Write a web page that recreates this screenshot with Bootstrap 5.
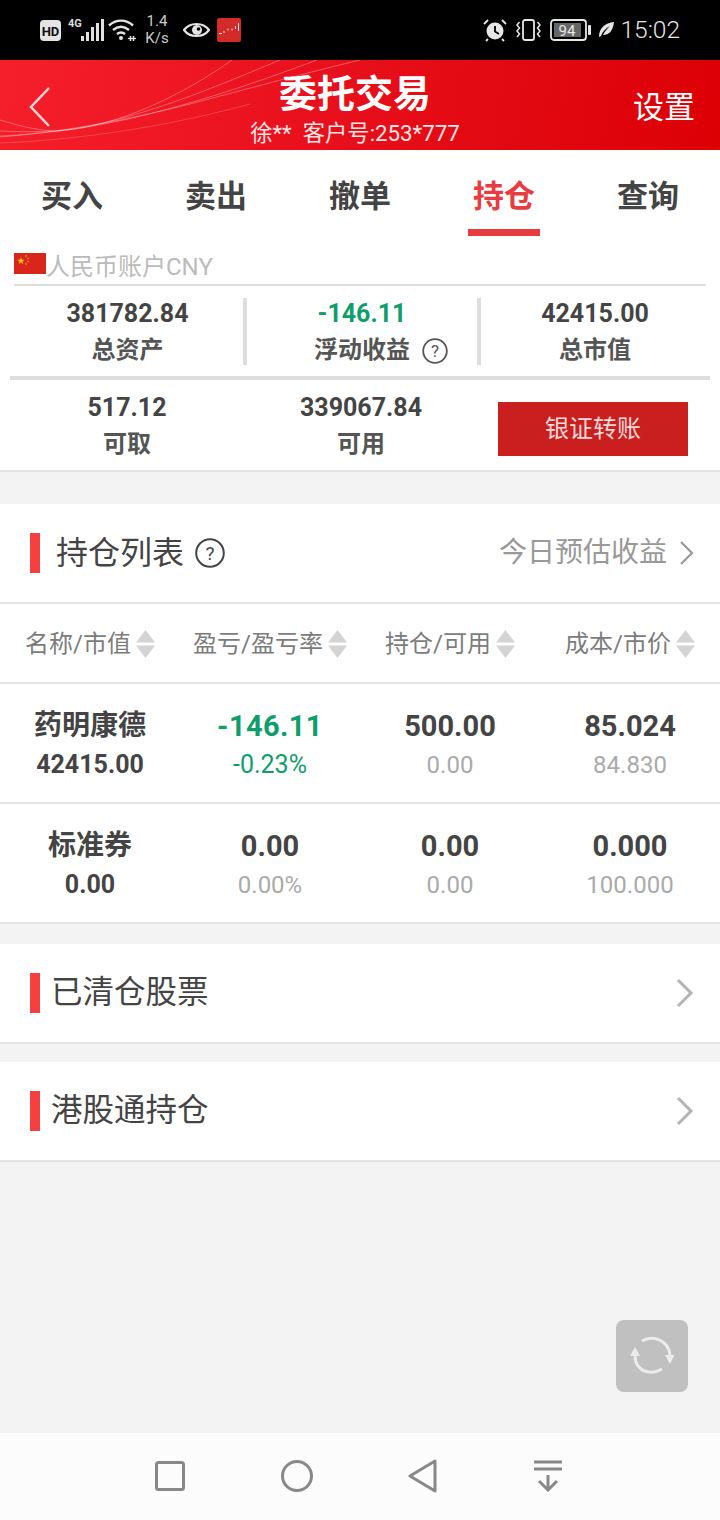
<!DOCTYPE html>
<html lang="zh-CN">
<head>
	<meta charset="UTF-8" />
	<meta name="viewport" content="width=device-width, initial-scale=1.0" />
	<title>委托交易</title>
	<link href="https://cdn.jsdelivr.net/npm/bootstrap@5.3.3/dist/css/bootstrap.min.css" rel="stylesheet" />
	<style>
		body {
			background: #f3f3f3;
			font-family: Roboto, "Noto Sans CJK SC", sans-serif;
			color: #444;
		}

		.phone {
			width: 720px;
			height: 1520px;
			overflow: hidden;
			position: relative;
		}

		.status-bar {
			height: 60px;
			background: #000;
			color: #ddd;
			padding: 0 40px;
		}

		.sig-icon { margin-left: 7px; }
		.wifi-icon { margin-left: 4px; }
		.net-speed {
			font-size: 15px;
			line-height: 17px;
			width: 28px;
			margin-left: 6px;
			color: #ccc;
		}
		.eye-icon { margin-left: 12px; }
		.app-icon { margin-left: 7px; }

		.clock {
			font-size: 24.5px;
			font-weight: 300;
			color: #e6e6e6;
			margin-left: 6px;
		}

		.app-header {
			height: 90px;
			background: linear-gradient(100deg, #f51f2b 0%, #e8101c 45%, #dc0005 100%);
			color: #fff;
			position: relative;
		}

		.header-lines {
			position: absolute;
			left: 0;
			top: 0;
		}

		.header-left {
			width: 250px;
			padding-left: 28px;
			padding-top: 4px;
			position: relative;
		}

		.header-mid {
			width: 210px;
			position: relative;
			white-space: nowrap;
		}

		.header-title {
			font-size: 38px;
			font-weight: 700;
			line-height: 44px;
			margin-top: 12px;
		}

		.header-sub {
			font-size: 22.3px;
			line-height: 28px;
			margin-top: 3px;
			color: #fbe4e4;
		}

		.header-right {
			position: relative;
			font-size: 31px;
			padding-right: 25px;
			padding-top: 6px;
		}

		.tab-bar {
			height: 86px;
			background: #fff;
		}

		.tab-item {
			flex: 1 1 0;
			text-align: center;
			font-size: 31px;
			font-weight: 700;
			line-height: 94px;
			position: relative;
			color: #444;
		}

		.tab-item.on {
			color: #e83c40;
		}

		.tab-item.on::after {
			content: "";
			position: absolute;
			left: 36px;
			right: 36px;
			top: 79px;
			height: 7px;
			background: #e83c40;
		}

		.acct {
			height: 236px;
			background: #fff;
			border-bottom: 2px solid #e4e4e4;
		}

		.acct-head {
			margin: 0 14px;
			height: 50px;
			padding-top: 17px;
			border-bottom: 2px solid #ddd;
			font-size: 24px;
			line-height: 27px;
			color: #bbb;
		}

		.acct-name {
			margin-top: 1px;
		}

		.stat-row {
			padding: 0 10px;
		}

		.stat-row-top {
			padding-left: 12px;
			margin-top: 12px;
		}

		.stat-row-bottom {
			margin-top: 12px;
		}

		.stat-cell {
			width: 234px;
			text-align: center;
		}

		.stat-cell-a {
			width: 235px;
		}

		.stat-cell-c {
			width: 228px;
		}

		.stat-val {
			font-size: 25px;
			font-weight: 700;
			line-height: 30px;
			margin-top: 1px;
		}

		.stat-lbl {
			font-size: 24px;
			font-weight: 700;
			line-height: 30px;
			margin-top: 6px;
			color: #555;
		}

		.help-mark {
			position: relative;
			display: inline-block;
		}

		.help-mark svg {
			position: absolute;
			left: 100%;
			top: 3px;
			margin-left: 12px;
		}

		.stat-div {
			border-right: 4px solid #ddd;
		}

		.stat-rule {
			margin: 11px 10px 0;
			height: 4px;
			background: #ddd;
		}

		.rise-down {
			color: #0f9d6c;
		}

		.transfer-btn {
			width: 190px;
			height: 54px;
			margin-left: 20px;
			margin-top: 10px;
			background: #c9201f;
			color: #f5dada;
			font-size: 24px;
			border: 0;
			border-radius: 0;
			padding: 0;
			line-height: 54px;
		}

		.block {
			background: #fff;
			border-bottom: 2px solid #e4e4e4;
		}

		.block-one {
			margin-top: 32px;
			border-bottom: 0;
		}

		.gap-row-a {
			margin-top: 20px;
		}

		.gap-row-b {
			margin-top: 18px;
		}

		.block-title {
			height: 100px;
			padding: 0 26px 0 30px;
			border-bottom: 2px solid #e4e4e4;
		}

		.red-tick {
			width: 10px;
			height: 40px;
			background: #f44040;
		}

		.title-text {
			font-size: 32px;
			color: #444;
		}

		.title-help {
			margin-left: 11px;
		}

		.today-link {
			font-size: 28px;
			color: #999;
		}

		.today-arrow {
			margin-left: 12px;
		}

		.col-heads {
			height: 80px;
			padding-top: 2px;
			border-bottom: 2px solid #e4e4e4;
		}

		.col-head {
			width: 180px;
			font-size: 24px;
			color: #7c7c7c;
			white-space: nowrap;
			gap: 5px;
		}

		.pos-row {
			height: 120px;
			padding-top: 3px;
			border-bottom: 2px solid #e4e4e4;
		}

		.pos-cell {
			width: 180px;
			text-align: center;
		}

		.pos-top {
			font-size: 29px;
			font-weight: 700;
			line-height: 36px;
		}

		.pos-name {
			font-size: 28px;
		}

		.pos-wide {
			letter-spacing: .4px;
		}

		.pos-bot {
			font-size: 24px;
			line-height: 32px;
			margin-top: 5px;
			color: #aaa;
		}

		.pos-bot.strong {
			font-size: 25px;
			font-weight: 700;
			color: #444;
		}

		.pos-bot.rise-down {
			font-size: 25px;
			color: #0f9d6c;
		}

		.link-row {
			height: 100px;
			padding: 0 26px 0 30px;
		}

		.link-text {
			font-size: 31.5px;
			color: #444;
			margin-left: 11px;
		}

		.refresh-btn {
			position: absolute;
			left: 616px;
			top: 1320px;
			width: 72px;
			height: 72px;
			border-radius: 8px;
			background: #c0c0c0;
		}

		.nav-bar {
			position: absolute;
			left: 0;
			right: 0;
			bottom: 0;
			height: 87px;
			background: #fcfcfc;
			padding: 0 158px 2px 155px;
		}
	</style>
</head>
<body>
	<div class="phone">

		<!-- status bar -->
		<div class="status-bar d-flex align-items-center">
			<svg width="21" height="21" viewBox="0 0 21 21"><rect width="21" height="21" rx="4" fill="#e4e4e4" /><text x="10.5" y="15.5" font-size="13" font-weight="700" font-family="Roboto" text-anchor="middle" fill="#111">HD</text></svg>
			<svg class="sig-icon" width="36" height="24" viewBox="0 0 36 24">
				<text x="0" y="9" font-size="11" font-weight="700" font-family="Roboto" fill="#ddd">4G</text>
				<g fill="#e0e0e0"><rect x="13" y="18" width="3" height="5" /><rect x="18" y="14" width="3" height="9" /><rect x="23" y="9" width="3" height="14" /><rect x="28" y="5" width="3" height="18" /><rect x="33" y="1" width="3" height="22" /></g>
			</svg>
			<svg class="wifi-icon" width="29" height="24" viewBox="0 0 29 24" fill="none" stroke="#e4e4e4" stroke-width="2.4">
				<path d="M1 7.5C8 1 18 1 25 7.5" /><path d="M5 12C10 8 16 8 21 12" /><path d="M9 16C11.500 14 14.500 14 17 16" />
				<circle cx="13" cy="20" r="2" fill="#e4e4e4" stroke="none" />
				<path d="M20 20.500h8" stroke-width="1.200" /><path d="M22.500 18v5M25.500 18v5" stroke-width="1.500" />
			</svg>
			<div class="net-speed text-center">1.4<br />K/s</div>
			<svg class="eye-icon" width="27" height="18" viewBox="0 0 27 18">
				<path d="M1 9C7 1 20 1 26 9 20 17 7 17 1 9Z" fill="none" stroke="#e4e4e4" stroke-width="2.200" />
				<circle cx="14" cy="9" r="5" fill="#e4e4e4" /><circle cx="15.500" cy="8" r="1.800" fill="#000" />
			</svg>
			<svg class="app-icon" width="24" height="24" viewBox="0 0 24 24">
				<rect width="24" height="24" rx="2" fill="#d32a2a" />
				<g stroke="#f3dcdc" stroke-width="1"><path d="M2 15.500h3M7 15v-2M11 12.500v-2M15 12.500v-2M18.500 11V8M21.500 13V5" /></g>
			</svg>

			<svg class="ms-auto" width="24" height="24" viewBox="0 0 24 24">
				<circle cx="12" cy="13" r="8.500" fill="#e6e6e6" /><path d="M12 8v5.500l4 2.500" fill="none" stroke="#000" stroke-width="1.800" />
				<path d="M1 6l4-4M23 6l-4-4M5 21l-2 2M19 21l2 2" stroke="#e6e6e6" stroke-width="1.800" />
			</svg>
			<svg class="ms-2" width="27" height="22" viewBox="0 0 27 22" fill="none" stroke="#e6e6e6" stroke-width="1.800">
				<rect x="8" y="1" width="11" height="20" rx="2" />
				<path d="M4.500 3l-2.500 3 2.500 3-2.500 3 2.500 3-2.500 3M22.500 3l2.500 3-2.500 3 2.500 3-2.500 3 2.500 3" stroke-width="1.500" />
			</svg>
			<svg class="ms-2" width="41" height="22" viewBox="0 0 41 22">
				<rect x="1" y="1" width="35" height="20" rx="3" fill="none" stroke="#e6e6e6" stroke-width="1.800" />
				<rect x="4" y="4" width="27" height="14" fill="#666" />
				<rect x="38" y="6" width="3" height="10" rx="1" fill="#e6e6e6" />
				<text x="17" y="16.500" font-size="15" font-family="Roboto" text-anchor="middle" fill="#e6e6e6">94</text>
			</svg>
			<svg class="ms-2" width="15" height="16" viewBox="0 0 15 16"><path d="M15 0C14 9 10 13 4 13 6 9 8 7 11 4 7 6 4 9 2 14L0 15C0 6 6 1 15 0Z" fill="#e6e6e6" /></svg>
			<div class="clock">15:02</div>
		</div>

		<!-- header -->
		<div class="app-header d-flex">
			<svg class="header-lines" width="460" height="90" viewBox="0 0 460 90" fill="none" stroke="#fff" stroke-width="1" stroke-opacity=".3">
				<path d="M0 60C20 66 35 70 55 71 120 68 190 30 232 0" />
				<path d="M0 71C20 72 35 72 55 71 130 64 220 25 280 0" />
				<path d="M0 77C25 75 40 73 60 71 150 60 250 25 317 0" />
				<path d="M0 76C50 74 120 62 190 44 250 28 310 12 360 0" />
				<path d="M0 83C80 80 170 66 250 44" stroke-opacity=".18" />
			</svg>
			<div class="header-left d-flex align-items-center">
				<svg width="24" height="42" viewBox="0 0 24 42" fill="none" stroke="#f6d8d8" stroke-width="2.500"><path d="M21 2L3 21 21 40" /></svg>
			</div>
			<div class="header-mid text-center">
				<div class="header-title">委托交易</div>
				<div class="header-sub">徐**&nbsp; 客户号:253*777</div>
			</div>
			<div class="header-right flex-grow-1 d-flex align-items-center justify-content-end">设置</div>
		</div>

		<!-- tabs -->
		<div class="tab-bar d-flex">
			<div class="tab-item">买入</div>
			<div class="tab-item">卖出</div>
			<div class="tab-item">撤单</div>
			<div class="tab-item on">持仓</div>
			<div class="tab-item">查询</div>
		</div>

		<!-- account summary -->
		<div class="acct">
			<div class="acct-head d-flex align-items-start">
				<svg width="32" height="21" viewBox="0 0 32 21">
					<rect width="32" height="21" fill="#d8261c" />
					<path d="M7 4l.9 2.700h2.800l-2.300 1.700.9 2.700-2.300-1.700-2.300 1.700.9-2.700-2.300-1.700h2.800Z" fill="#f7c51e" />
					<g fill="#f7c51e"><circle cx="12" cy="3" r=".8" /><circle cx="14" cy="5.500" r=".8" /><circle cx="14" cy="8.500" r=".8" /><circle cx="12" cy="11" r=".8" /></g>
				</svg>
				<span class="acct-name">人民币账户CNY</span>
			</div>

			<div class="stat-row stat-row-top d-flex">
				<div class="stat-cell stat-cell-a stat-div">
					<div class="stat-val">381782.84</div>
					<div class="stat-lbl">总资产</div>
				</div>
				<div class="stat-cell stat-div">
					<div class="stat-val rise-down">-146.11</div>
					<div class="stat-lbl"><span class="help-mark">浮动收益<svg width="26" height="26" viewBox="0 0 26 26"><circle cx="13" cy="13" r="11.800" fill="none" stroke="#555" stroke-width="1.800" /><text x="13" y="19" font-size="17" font-weight="400" font-family="Roboto" text-anchor="middle" fill="#555">?</text></svg></span></div>
				</div>
				<div class="stat-cell stat-cell-c">
					<div class="stat-val">42415.00</div>
					<div class="stat-lbl">总市值</div>
				</div>
			</div>

			<div class="stat-rule"></div>

			<div class="stat-row stat-row-bottom d-flex align-items-start">
				<div class="stat-cell">
					<div class="stat-val">517.12</div>
					<div class="stat-lbl">可取</div>
				</div>
				<div class="stat-cell">
					<div class="stat-val">339067.84</div>
					<div class="stat-lbl">可用</div>
				</div>
				<button class="btn transfer-btn" type="button">银证转账</button>
			</div>
		</div>

		<!-- position list -->
		<div class="block block-one">
			<div class="block-title d-flex align-items-center">
				<div class="red-tick"></div>
				<div class="title-text ms-3">持仓列表</div>
				<svg class="title-help" width="30" height="30" viewBox="0 0 30 30"><circle cx="15" cy="15" r="13.800" fill="none" stroke="#444" stroke-width="2" /><text x="15" y="22" font-size="19" font-family="Roboto" text-anchor="middle" fill="#444">?</text></svg>
				<div class="today-link ms-auto">今日预估收益</div>
				<svg class="today-arrow" width="15" height="26" viewBox="0 0 15 26" fill="none" stroke="#999" stroke-width="2.200"><path d="M2 2l11 11-11 11" /></svg>
			</div>

			<div class="col-heads d-flex">
				<div class="col-head d-flex align-items-center justify-content-center">名称/市值
					<svg width="19" height="28" viewBox="0 0 19 28" fill="#d4d4d4"><path d="M9.500 0L19 12.500H0ZM0 15.500H19L9.500 28Z" /></svg>
				</div>
				<div class="col-head d-flex align-items-center justify-content-center">盈亏/盈亏率
					<svg width="19" height="28" viewBox="0 0 19 28" fill="#d4d4d4"><path d="M9.500 0L19 12.500H0ZM0 15.500H19L9.500 28Z" /></svg>
				</div>
				<div class="col-head d-flex align-items-center justify-content-center">持仓/可用
					<svg width="19" height="28" viewBox="0 0 19 28" fill="#d4d4d4"><path d="M9.500 0L19 12.500H0ZM0 15.500H19L9.500 28Z" /></svg>
				</div>
				<div class="col-head d-flex align-items-center justify-content-center">成本/市价
					<svg width="19" height="28" viewBox="0 0 19 28" fill="#d4d4d4"><path d="M9.500 0L19 12.500H0ZM0 15.500H19L9.500 28Z" /></svg>
				</div>
			</div>

			<div class="pos-row d-flex align-items-center">
				<div class="pos-cell"><div class="pos-top pos-name">药明康德</div><div class="pos-bot strong">42415.00</div></div>
				<div class="pos-cell"><div class="pos-top pos-wide rise-down">-146.11</div><div class="pos-bot rise-down">-0.23%</div></div>
				<div class="pos-cell"><div class="pos-top">500.00</div><div class="pos-bot">0.00</div></div>
				<div class="pos-cell"><div class="pos-top">85.024</div><div class="pos-bot">84.830</div></div>
			</div>
			<div class="pos-row d-flex align-items-center">
				<div class="pos-cell"><div class="pos-top pos-name">标准券</div><div class="pos-bot strong">0.00</div></div>
				<div class="pos-cell"><div class="pos-top">0.00</div><div class="pos-bot">0.00%</div></div>
				<div class="pos-cell"><div class="pos-top">0.00</div><div class="pos-bot">0.00</div></div>
				<div class="pos-cell"><div class="pos-top">0.000</div><div class="pos-bot">100.000</div></div>
			</div>
		</div>

		<!-- cleared / HK links -->
		<div class="block link-row gap-row-a d-flex align-items-center">
			<div class="red-tick"></div>
			<div class="link-text">已清仓股票</div>
			<svg class="ms-auto" width="18" height="30" viewBox="0 0 18 30" fill="none" stroke="#b4b4b4" stroke-width="3"><path d="M2 2l13 13-13 13" /></svg>
		</div>
		<div class="block link-row gap-row-b d-flex align-items-center">
			<div class="red-tick"></div>
			<div class="link-text">港股通持仓</div>
			<svg class="ms-auto" width="18" height="30" viewBox="0 0 18 30" fill="none" stroke="#b4b4b4" stroke-width="3"><path d="M2 2l13 13-13 13" /></svg>
		</div>

		<!-- floating refresh -->
		<div class="refresh-btn d-flex align-items-center justify-content-center">
			<svg width="44" height="40" viewBox="0 0 44 40" fill="none" stroke="#ececec" stroke-width="3">
				<path d="M12 5C20 0 30 2 36 9 39 13 40 16 40 20" />
				<path d="M32 33C24 38 14 37 9 31 6 28 5 24 5 20" />
				<path d="M35 19H44.500L40 28ZM0 20H10L5 11Z" fill="#ececec" stroke="none" />
			</svg>
		</div>

		<!-- android nav -->
		<div class="nav-bar d-flex align-items-center justify-content-between">
			<svg width="30" height="30" viewBox="0 0 30 30" fill="none" stroke="#888" stroke-width="3"><rect x="1.500" y="1.500" width="27" height="27" rx="2" /></svg>
			<svg width="32" height="32" viewBox="0 0 32 32" fill="none" stroke="#888" stroke-width="3"><circle cx="16" cy="16" r="14.500" /></svg>
			<svg width="30" height="34" viewBox="0 0 30 34" fill="none" stroke="#888" stroke-width="3" stroke-linejoin="round"><path d="M27 2V32L2 17Z" /></svg>
			<svg width="28" height="32" viewBox="0 0 28 32" fill="none" stroke="#888" stroke-width="3"><path d="M0 2H28M0 9H28M14 15V30M5 21L14 30 23 21" /></svg>
		</div>
	</div>

	<script src="https://cdn.jsdelivr.net/npm/bootstrap@5.3.3/dist/js/bootstrap.bundle.min.js"></script>
</body>
</html>
